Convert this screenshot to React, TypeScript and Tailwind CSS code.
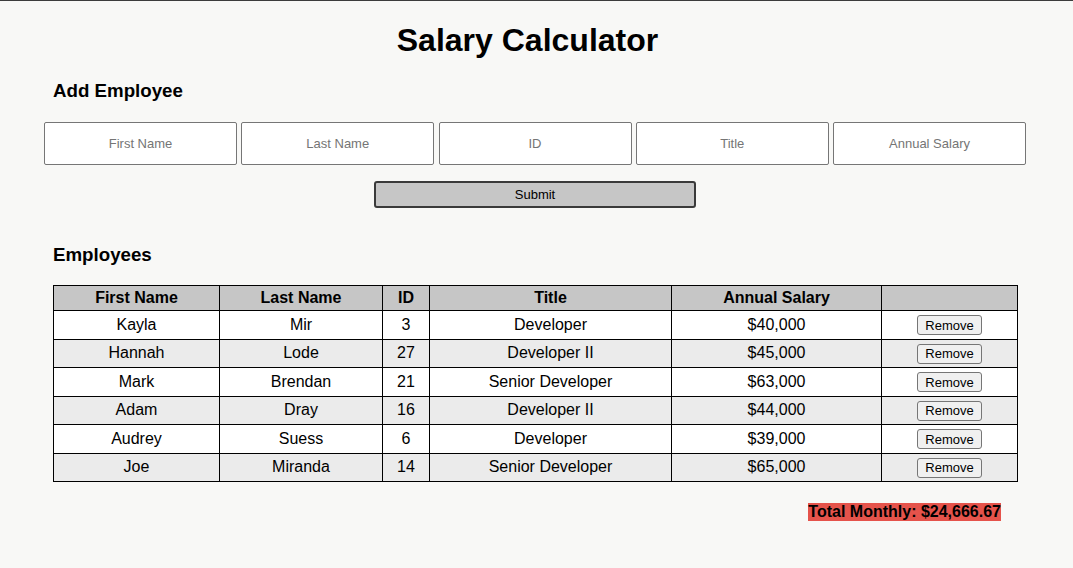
import React from "react";

type Employee = {
  firstName: string;
  lastName: string;
  id: number;
  title: string;
  salary: number;
};

const employees: Employee[] = [
  { firstName: "Kayla", lastName: "Mir", id: 3, title: "Developer", salary: 40000 },
  { firstName: "Hannah", lastName: "Lode", id: 27, title: "Developer II", salary: 45000 },
  { firstName: "Mark", lastName: "Brendan", id: 21, title: "Senior Developer", salary: 63000 },
  { firstName: "Adam", lastName: "Dray", id: 16, title: "Developer II", salary: 44000 },
  { firstName: "Audrey", lastName: "Suess", id: 6, title: "Developer", salary: 39000 },
  { firstName: "Joe", lastName: "Miranda", id: 14, title: "Senior Developer", salary: 65000 },
];

const fields = ["First Name", "Last Name", "ID", "Title", "Annual Salary"];

export default function App() {
  const total = employees.reduce((sum, e) => sum + e.salary, 0) / 12;

  return (
    <div className="min-h-screen bg-[#f8f8f6] border-t border-[#3c3c3c] font-['Liberation_Sans',Arial,sans-serif] text-black">
      <h1 className="pt-[21px] pr-[18px] text-center text-[32px] font-bold leading-[37px]">
        Salary Calculator
      </h1>

      <h3 className="mt-[21px] ml-[53px] text-[18.72px] font-bold leading-[22px]">
        Add Employee
      </h3>

      <form className="mt-[20px]">
        <div className="flex gap-[4.25px] pl-[44px]">
          {fields.map((f) => (
            <input
              key={f}
              type="text"
              placeholder={f}
              className="w-[193px] h-[43px] bg-white border border-[#767676] rounded-[2px] text-center text-[13px] placeholder:text-[#757575] outline-none"
            />
          ))}
        </div>
        <div className="mt-[16px] flex justify-center pr-[3px]">
          <button
            type="button"
            className="w-[322px] h-[27px] bg-[#c6c6c6] border-2 border-[#3a3a3a] rounded-[3px] text-[13px] leading-none"
          >
            Submit
          </button>
        </div>
      </form>

      <h3 className="mt-[36px] ml-[53px] text-[18.72px] font-bold leading-[22px]">
        Employees
      </h3>

      <table className="mt-[19px] ml-[53px] w-[965px] border-collapse text-[16px] text-center">
        <thead>
          <tr className="h-[25px] bg-[#c6c6c6]">
            <th className="w-[166px] border border-black font-bold">First Name</th>
            <th className="w-[163px] border border-black font-bold">Last Name</th>
            <th className="w-[47px] border border-black font-bold">ID</th>
            <th className="w-[242px] border border-black font-bold">Title</th>
            <th className="w-[210px] border border-black font-bold">Annual Salary</th>
            <th className="border border-black"></th>
          </tr>
        </thead>
        <tbody>
          {employees.map((e, i) => (
            <tr key={e.id} className={`h-[28.5px] ${i % 2 === 1 ? "bg-[#ebebeb]" : "bg-white"}`}>
              <td className="border border-black">{e.firstName}</td>
              <td className="border border-black">{e.lastName}</td>
              <td className="border border-black">{e.id}</td>
              <td className="border border-black">{e.title}</td>
              <td className="border border-black">${e.salary.toLocaleString("en-US")}</td>
              <td className="border border-black">
                <button className="w-[65px] h-[20px] bg-[#f0f0f0] border border-[#767676] rounded-[3px] text-[13px] leading-none">
                  Remove
                </button>
              </td>
            </tr>
          ))}
        </tbody>
      </table>

      <div className="mt-[21px] flex justify-end pr-[72px]">
        <span className="bg-[#e5534b] text-[16px] font-bold leading-[18px]">
          Total Monthly: $
          {total.toLocaleString("en-US", { minimumFractionDigits: 2, maximumFractionDigits: 2 })}
        </span>
      </div>
    </div>
  );
}
